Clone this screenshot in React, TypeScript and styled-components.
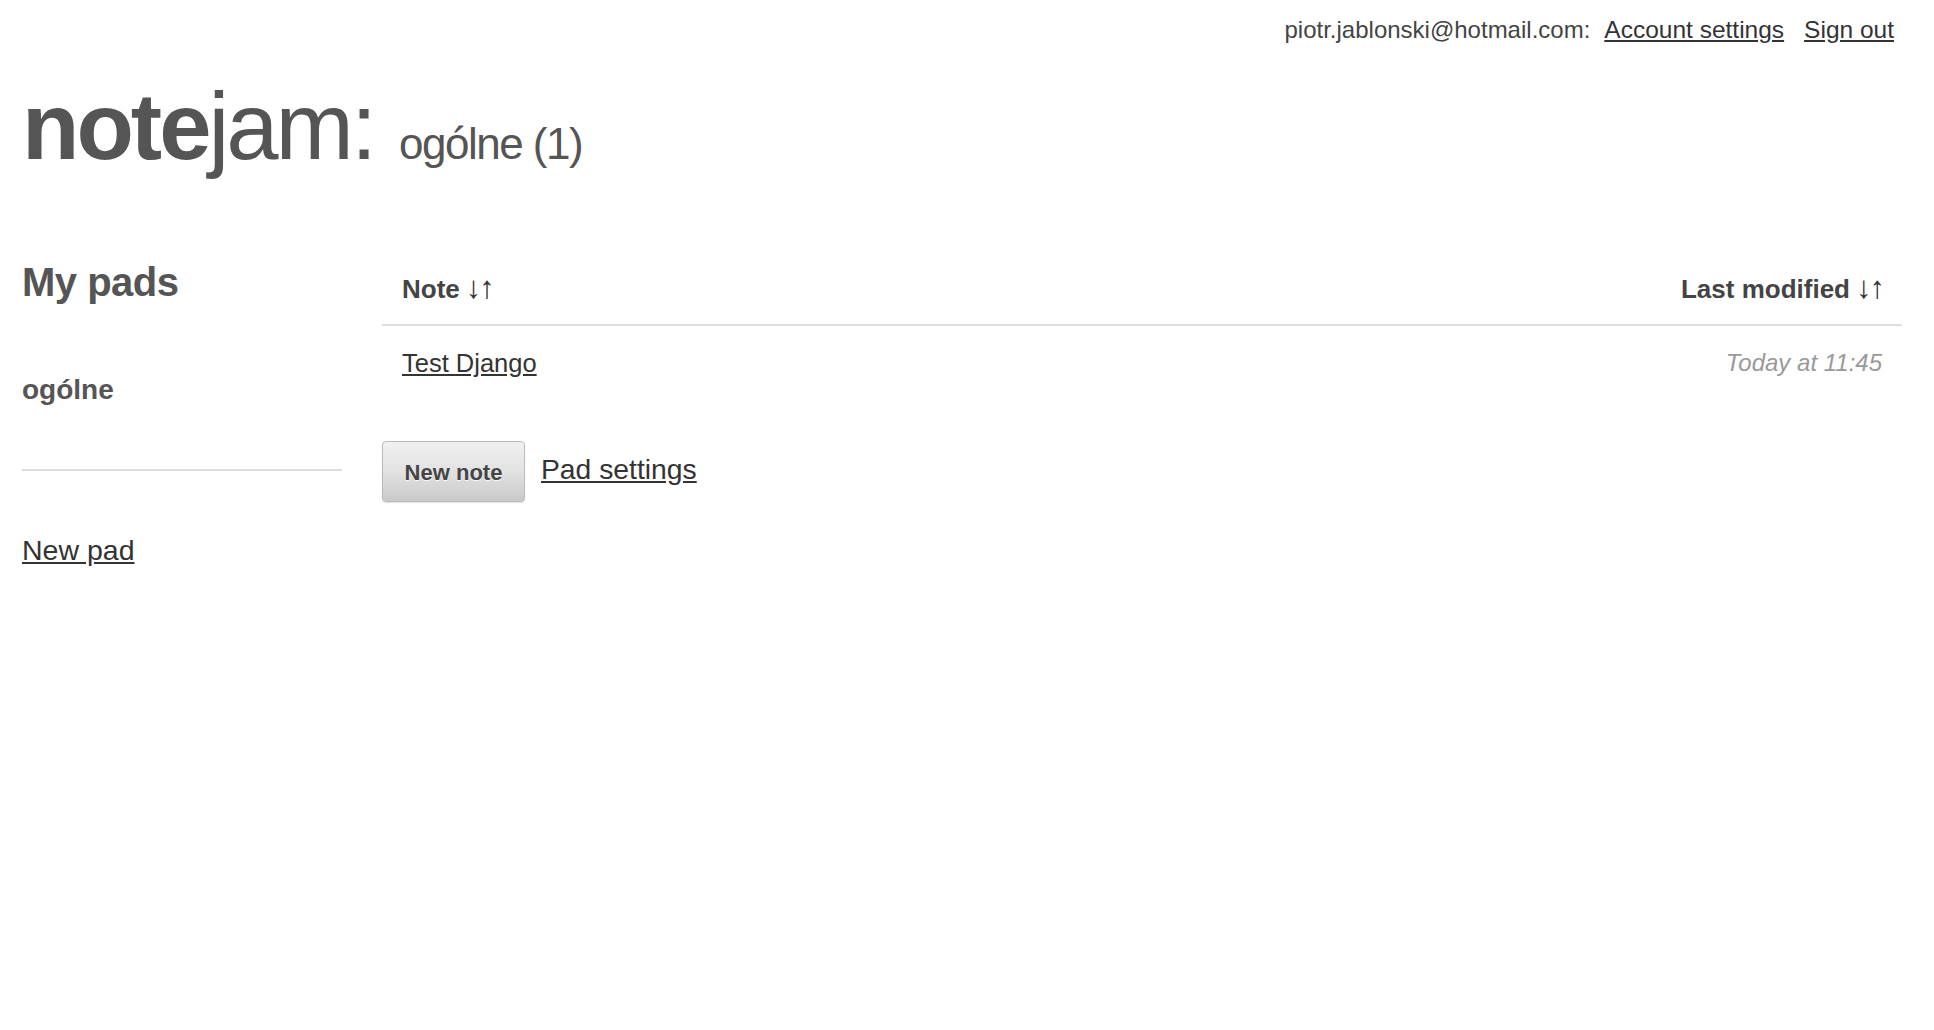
import React from "react";
import styled, { createGlobalStyle } from "styled-components";

const GlobalStyle = createGlobalStyle`
  html, body { margin: 0; padding: 0; background: #fff; }
  body {
    font-family: "Liberation Sans", Arial, sans-serif;
    color: #444;
    -webkit-font-smoothing: antialiased;
  }
`;

const Page = styled.div`
  width: 1934px;
  min-height: 1030px;
  box-sizing: border-box;
  padding: 0 32px 0 22px;
`;

const TopBar = styled.div`
  display: flex;
  justify-content: flex-end;
  align-items: center;
  padding: 14px 8px 0 0;
  height: 32px;
  font-size: 24px;
  line-height: 32px;
  color: #444;
`;

const UserEmail = styled.span`
  margin-right: 14px;
`;

const TopLink = styled.a<{ $gap?: number }>`
  color: #333;
  font-size: 24.5px;
  text-decoration: underline;
  margin-left: ${(p) => p.$gap ?? 0}px;
`;

const Title = styled.h1`
  margin: 34px 0 0 0;
  font-size: 94px;
  line-height: 94px;
  height: 94px;
  color: #555;
  font-weight: normal;
  letter-spacing: -3px;
  display: flex;
  align-items: baseline;
`;

const Brand = styled.span`
  white-space: nowrap;
`;

const Bold = styled.strong`
  font-weight: bold;
`;

const Subtitle = styled.span`
  font-size: 44px;
  letter-spacing: -1.5px;
  margin-left: 25px;
  color: #555;
`;

const Columns = styled.div`
  display: grid;
  grid-template-columns: 320px 1fr;
  column-gap: 40px;
  margin-top: 78px;
`;

const Sidebar = styled.aside`
  display: flex;
  flex-direction: column;
`;

const SideTitle = styled.h2`
  margin: 6px 0 0 0;
  font-size: 40px;
  line-height: 48px;
  font-weight: bold;
  color: #555;
  letter-spacing: -0.5px;
`;

const PadList = styled.ul`
  list-style: none;
  margin: 66px 0 0 0;
  padding: 0 0 61px 0;
  border-bottom: 2px solid #ddd;
`;

const PadItem = styled.li`
  font-size: 28px;
  line-height: 36px;
  font-weight: bold;
  color: #555;
`;

const SideLink = styled.a`
  margin-top: 61px;
  font-size: 28.5px;
  line-height: 36px;
  color: #333;
  text-decoration: underline;
  align-self: flex-start;
`;

const Main = styled.section`
  display: flex;
  flex-direction: column;
`;

const Table = styled.table`
  width: 100%;
  border-collapse: collapse;
`;

const HeadCell = styled.th<{ $align?: string }>`
  text-align: ${(p) => p.$align ?? "left"};
  padding: 21px 19px 20px 20px;
  font-size: 26px;
  line-height: 30px;
  font-weight: bold;
  color: #444;
  border-bottom: 2px solid #ddd;
`;

const SortArrows = styled.span`
  font-weight: normal;
  font-size: 31px;
  color: #333;
  margin-left: 6px;
  letter-spacing: -2px;
`;

const Cell = styled.td<{ $align?: string }>`
  text-align: ${(p) => p.$align ?? "left"};
  padding: 21px 20px 23px 20px;
  font-size: 25.5px;
  line-height: 30px;
`;

const NoteLink = styled.a`
  color: #333;
  text-decoration: underline;
`;

const DateText = styled.span`
  font-style: italic;
  font-size: 24px;
  color: #999;
`;

const Actions = styled.div`
  display: flex;
  align-items: center;
  gap: 16px;
  margin-top: 40px;
`;

const Button = styled.button`
  height: 61px;
  width: 143px;
  box-sizing: border-box;
  border: 1px solid #bbb;
  border-radius: 4px;
  background: linear-gradient(to bottom, #f1f1f1 0%, #e2e2e2 50%, #c9c9c9 100%);
  font-family: "Liberation Sans", Arial, sans-serif;
  font-weight: bold;
  font-size: 22px;
  color: #444;
  text-shadow: 0 1px 0 rgba(255, 255, 255, 0.75);
  padding: 2px 0 0 0;
  box-shadow: 0 1px 1px rgba(0, 0, 0, 0.12);
`;

const ActionLink = styled.a`
  font-size: 28.3px;
  line-height: 36px;
  padding-bottom: 5px;
  color: #333;
  text-decoration: underline;
`;

export default function App() {
  return (
    <>
      <GlobalStyle />
      <Page>
        <TopBar>
          <UserEmail>piotr.jablonski@hotmail.com:</UserEmail>
          <TopLink href="#">Account settings</TopLink>
          <TopLink href="#" $gap={20}>Sign out</TopLink>
        </TopBar>
        <Title>
          <Brand>
            <Bold>note</Bold>jam:
          </Brand>
          <Subtitle>ogólne (1)</Subtitle>
        </Title>
        <Columns>
          <Sidebar>
            <SideTitle>My pads</SideTitle>
            <PadList>
              <PadItem>ogólne</PadItem>
            </PadList>
            <SideLink href="#">New pad</SideLink>
          </Sidebar>
          <Main>
            <Table>
              <thead>
                <tr>
                  <HeadCell>
                    Note<SortArrows>↓↑</SortArrows>
                  </HeadCell>
                  <HeadCell $align="right">
                    Last modified<SortArrows>↓↑</SortArrows>
                  </HeadCell>
                </tr>
              </thead>
              <tbody>
                <tr>
                  <Cell>
                    <NoteLink href="#">Test Django</NoteLink>
                  </Cell>
                  <Cell $align="right">
                    <DateText>Today at 11:45</DateText>
                  </Cell>
                </tr>
              </tbody>
            </Table>
            <Actions>
              <Button>New note</Button>
              <ActionLink href="#">Pad settings</ActionLink>
            </Actions>
          </Main>
        </Columns>
      </Page>
    </>
  );
}
